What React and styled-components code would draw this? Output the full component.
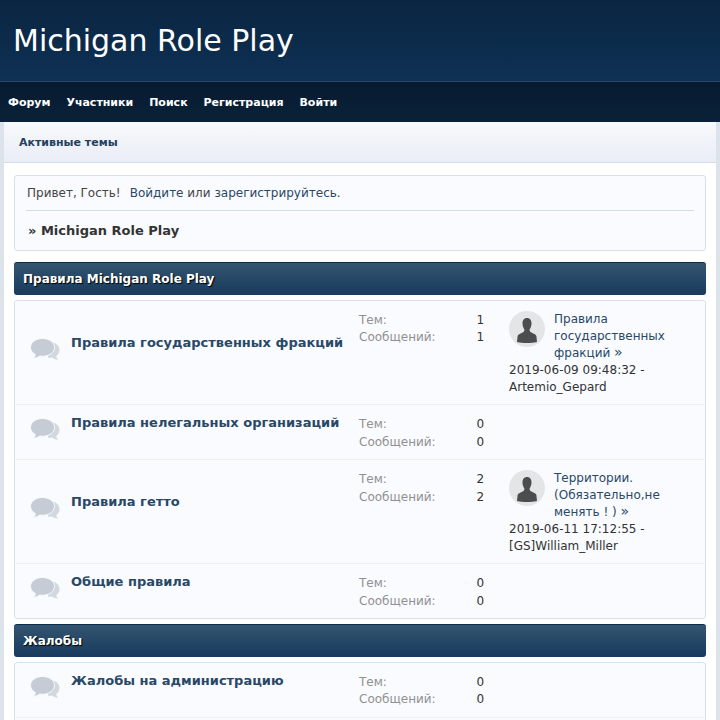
import React from "react";
import styled, { createGlobalStyle } from "styled-components";

const GlobalStyle = createGlobalStyle`
  html, body {
    margin: 0;
    padding: 0;
    height: 720px;
    overflow: hidden;
    background: #dce3eb;
    font-family: "DejaVu Sans", sans-serif;
    font-size: 12px;
    color: #333;
  }
`;

const BubbleIcon = () => (
  <svg width="30" height="23" viewBox="0 0 30 23">
    <path
      d="M18 3.500c6 .2 11.500 3.300 11.500 8.500 0 2.700-1.300 4.700-3.300 6 .1 1.300.7 2.500 1.800 3.800-2.200-.2-4.300-1-5.800-2.300-1.500.3-3 .3-4.200 0z"
      fill="#d2d8df"
    />
    <path
      d="M12.500 .5C19 .5 24.500 4.200 24.500 9.300c0 5.200-5.500 9-12 9-1 0-2-.1-2.900-.3C8 19.300 6 20.200 3.500 20.500c1.200-1.300 1.800-2.600 1.900-4C2.300 14.900 .5 12.300 .5 9.300.5 4.200 6 .5 12.500 .5z"
      fill="#c5ccd5"
      stroke="#f8fafc"
      strokeWidth="1"
    />
  </svg>
);

const Avatar = () => (
  <AvatarCircle>
    <svg width="36" height="36" viewBox="0 0 36 36">
      <path
        d="M18 7c2.900 0 4.500 2.200 4.500 5.500 0 2.400-.8 4.500-1.900 5.700 0 1.800.4 2.600 1.800 3.300 1.900.9 4.300 1.700 5 3.500l.6 6c-2.800.7-6.300 1-10 1s-7.200-.3-10-1l.6-6c.7-1.800 3.100-2.600 5-3.500 1.400-.7 1.800-1.500 1.800-3.300-1.100-1.200-1.900-3.300-1.900-5.700C13.500 9.200 15.100 7 18 7z"
        fill="#4d4d4f"
      />
    </svg>
  </AvatarCircle>
);

const sections = [
  {
    title: "Правила Michigan Role Play",
    forums: [
      {
        name: "Правила государственных фракций",
        topics: 1,
        posts: 1,
        last: {
          title: "Правила государственных фракций",
          date: "2019-06-09 09:48:32",
          author: "Artemio_Gepard",
        },
      },
      { name: "Правила нелегальных организаций", topics: 0, posts: 0 },
      {
        name: "Правила гетто",
        topics: 2,
        posts: 2,
        last: {
          title: "Территории. (Обязательно,не менять ! )",
          date: "2019-06-11 17:12:55",
          author: "[GS]William_Miller",
        },
      },
      { name: "Общие правила", topics: 0, posts: 0 },
    ],
  },
  {
    title: "Жалобы",
    cutOff: true,
    forums: [{ name: "Жалобы на администрацию", topics: 0, posts: 0 }],
  },
];

const App = () => {
  return (
    <>
      <GlobalStyle />
      <Header>
        <SiteTitle>Michigan Role Play</SiteTitle>
      </Header>
      <Nav>
        {["Форум", "Участники", "Поиск", "Регистрация", "Войти"].map((item) => (
          <NavLink key={item}>{item}</NavLink>
        ))}
      </Nav>
      <Wrapper>
        <SubNav>Активные темы</SubNav>
        <Content>
          <WelcomeBox>
            <Greeting>
              Привет, Гость!
              <AuthLinks>
                <a>Войдите</a> или <a>зарегистрируйтесь</a>.
              </AuthLinks>
            </Greeting>
            <Crumbs>» Michigan Role Play</Crumbs>
          </WelcomeBox>
          {sections.map((section) => (
            <Section key={section.title}>
              <CategoryBar>{section.title}</CategoryBar>
              <ForumList>
                {section.forums.map((forum) => (
                  <ForumRow key={forum.name} $tall={!!forum.last}>
                    <IconCell $tall={!!forum.last}>
                      <BubbleIcon />
                    </IconCell>
                    <ForumName $tall={!!forum.last}>{forum.name}</ForumName>
                    <Stats>
                      <StatLabel>Тем:</StatLabel>
                      <StatValue>{forum.topics}</StatValue>
                      <StatLabel>Сообщений:</StatLabel>
                      <StatValue>{forum.posts}</StatValue>
                    </Stats>
                    <LastPost>
                      {forum.last && (
                        <>
                          <PostHead>
                            <Avatar />
                            <PostTitle>
                              {forum.last.title} <Arrow>»</Arrow>
                            </PostTitle>
                          </PostHead>
                          <div>
                            {forum.last.date} - {forum.last.author}
                          </div>
                        </>
                      )}
                    </LastPost>
                  </ForumRow>
                ))}
                {section.cutOff && <ForumRow />}
              </ForumList>
            </Section>
          ))}
        </Content>
      </Wrapper>
    </>
  );
};

export default App;

const Header = styled.header`
  height: 82px;
  box-sizing: border-box;
  padding: 23px 13px 0;
  background: linear-gradient(#0a2540, #0e3155);
  border-bottom: 1px solid #2b4560;
`;

const SiteTitle = styled.h1`
  margin: 0;
  font-size: 30px;
  line-height: 36px;
  font-weight: 400;
  color: #fff;
`;

const Nav = styled.nav`
  height: 40px;
  box-sizing: border-box;
  display: flex;
  align-items: center;
  gap: 15.900px;
  padding: 0 8px;
  background: linear-gradient(#071a30, #0a2238);
`;

const NavLink = styled.a`
  font-size: 11px;
  font-weight: 700;
  color: #fff;
`;

const Wrapper = styled.div`
  margin: 0 4px;
  background: #fff;
`;

const SubNav = styled.div`
  height: 41px;
  box-sizing: border-box;
  padding: 1px 0 0 15px;
  display: flex;
  align-items: center;
  font-size: 11px;
  font-weight: 700;
  color: #24415f;
  background: linear-gradient(#f8f9fc, #e9edf5);
  border-bottom: 1px solid #d3deea;
`;

const Content = styled.main`
  padding: 12px 10px 0;
`;

const WelcomeBox = styled.div`
  height: 76px;
  box-sizing: border-box;
  padding: 0 11px;
  background: #f9fbfe;
  border: 1px solid #d8e1ea;
  border-radius: 3px;
`;

const Greeting = styled.div`
  height: 35px;
  box-sizing: border-box;
  padding: 9px 1px 0;
  line-height: 17px;
  color: #444;
  border-bottom: 1px solid #d3dde7;
`;

const AuthLinks = styled.span`
  margin-left: 9px;
  a {
    color: #2a4866;
  }
`;

const Crumbs = styled.div`
  padding: 11px 2px 0;
  font-size: 13px;
  line-height: 17px;
  font-weight: 700;
  color: #333;
`;

const Section = styled.section`
  margin-top: 11px;

  & + & {
    margin-top: 4.600px;
  }
`;

const CategoryBar = styled.div`
  height: 33px;
  box-sizing: border-box;
  padding-left: 9px;
  display: flex;
  align-items: center;
  font-size: 12px;
  font-weight: 700;
  color: #fff;
  text-shadow: 1px 1px 1px #000;
  background: linear-gradient(#34556f, #173a5e);
  border-top: 1px solid #0e2c47;
  border-radius: 3px;
`;

const ForumList = styled.div`
  margin-top: 5px;
  background: #f9fbfe;
  border: 1px solid #d8e1ea;
  border-radius: 3px;
`;

const ForumRow = styled.div`
  height: ${(p) => (p.$tall ? "104.200px" : "55px")};
  box-sizing: border-box;
  display: flex;
  align-items: flex-start;
  padding-left: 15px;
  border-bottom: 1px solid #eef1f5;

  &:last-child {
    height: 54px;
    border-bottom: none;
  }
`;

const IconCell = styled.div`
  width: 41px;
  flex: none;
  display: flex;
  padding-top: ${(p) => (p.$tall ? "37px" : "13px")};
`;

const ForumName = styled.div`
  width: 288px;
  flex: none;
  padding-top: ${(p) => (p.$tall ? "33px" : "9px")};
  font-size: 13px;
  line-height: 17px;
  font-weight: 700;
  color: #2a4866;
`;

const Stats = styled.div`
  width: 150px;
  flex: none;
  padding-top: 10.900px;
  display: grid;
  grid-template-columns: 117.500px 1fr;
  line-height: 17.500px;
`;

const StatLabel = styled.span`
  color: #919191;
`;

const StatValue = styled.span`
  color: #333;
`;

const LastPost = styled.div`
  flex: 1;
  padding: 10px 10px 0 0;
  line-height: 17px;
  color: #333;
`;

const PostHead = styled.div`
  display: flex;
  gap: 9px;
`;

const PostTitle = styled.a`
  color: #2a4866;
`;

const Arrow = styled.span`
  font-size: 14px;
  line-height: 1;
`;

const AvatarCircle = styled.div`
  width: 36px;
  height: 36px;
  flex: none;
  border-radius: 50%;
  overflow: hidden;
  background: #e4e5e7;
`;
